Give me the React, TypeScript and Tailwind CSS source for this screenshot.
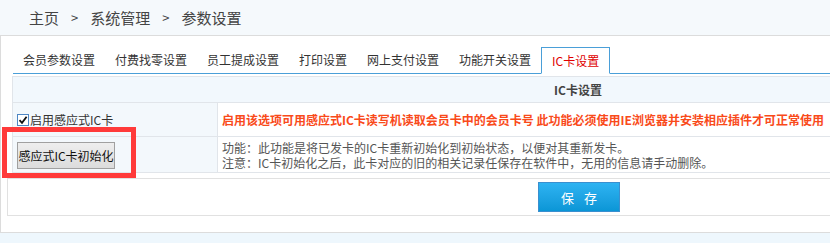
import React from "react";

const tabs = ["会员参数设置", "付费找零设置", "员工提成设置", "打印设置", "网上支付设置", "功能开关设置", "IC卡设置"];

const CheckBox = () => (
  <span className="inline-flex w-[12px] h-[12px] border border-[#4d86c4] bg-white items-center justify-center shrink-0">
    <svg width="10" height="10" viewBox="0 0 10 10">
      <path d="M1.5 5.2 L4 7.8 L8.6 1.8" fill="none" stroke="#111" strokeWidth="1.8" />
    </svg>
  </span>
);

export default function App() {
  return (
    <div
      className="relative w-[830px] h-[243px] overflow-hidden bg-[#eef7fd]"
      style={{ fontFamily: '"Noto Sans CJK SC", "Liberation Sans", sans-serif' }}
    >
      {/* breadcrumb */}
      <div className="h-[36px] bg-[#f5f9fc] border-b border-[#dcdcdc] flex items-center pl-[29px] text-[15px] text-[#444] leading-none">
        <span>主页</span>
        <span className="mx-[12px] text-[13px]">&gt;</span>
        <span>系统管理</span>
        <span className="mx-[12px] text-[13px]">&gt;</span>
        <span>参数设置</span>
      </div>

      {/* content panel */}
      <div className="h-[197px] bg-white border-l border-b border-[#dcdcdc] overflow-hidden">
        <div className="ml-[12px] mt-[11px] flex border-b border-[#4a9fd8] w-[1200px] h-[27px]">
          {tabs.map((t, i) =>
            i === tabs.length - 1 ? (
              <div
                key={t}
                className="px-[10px] h-[27px] border border-[#4a9fd8] border-b-white bg-white text-[12px] leading-[25px] text-[#e00000]"
              >
                {t}
              </div>
            ) : (
              <div key={t} className="px-[10px] h-[26px] text-[12px] leading-[26px] text-[#333]">
                {t}
              </div>
            )
          )}
        </div>

        <div className="ml-[11px] mt-[2px] w-[1132px] border border-[#e1e5ea]">
          <div className="h-[26px] bg-[#f2f8fd] border-b border-[#e1e5ea] flex items-center justify-center text-[12px] font-bold text-[#444]">
            IC卡设置
          </div>
          <div className="flex h-[34px] border-b border-[#e1e5ea]">
            <div className="w-[205px] bg-[#f3f8fc] border-r border-[#e1e5ea] flex items-center pl-[4px] gap-[1px] text-[12px] text-[#333]">
              <CheckBox />
              <span>启用感应式IC卡</span>
            </div>
            <div className="flex-1 flex items-center pl-[4px] text-[12px] font-bold text-[#f94a1a] whitespace-nowrap">
              启用该选项可用感应式IC卡读写机读取会员卡中的会员卡号 此功能必须使用IE浏览器并安装相应插件才可正常使用
            </div>
          </div>
          <div className="flex h-[35px]">
            <div className="w-[205px] bg-[#f3f8fc] border-r border-[#e1e5ea] flex items-center pl-[4px]">
              <button className="w-[98px] h-[27px] mt-[2px] border border-[#a0a0a0] bg-gradient-to-b from-[#eeeeee] to-[#dcdcdc] text-[12px] text-[#111] leading-none">
                感应式IC卡初始化
              </button>
            </div>
            <div className="flex-1 flex flex-col justify-center pl-[4px] text-[12px] leading-[15px] text-[#555] whitespace-nowrap">
              <span>功能：此功能是将已发卡的IC卡重新初始化到初始状态，以便对其重新发卡。</span>
              <span>注意：IC卡初始化之后，此卡对应的旧的相关记录任保存在软件中，无用的信息请手动删除。</span>
            </div>
          </div>
        </div>

        <div className="ml-[6px] mt-[5px] w-[1144px] h-[38px] border border-[#e1e1e1] flex items-center justify-center">
          <button className="w-[82px] h-[30px] border border-[#3a8fcf] bg-gradient-to-b from-[#2db3f2] to-[#0a96d6] text-white text-[13px] tracking-[10px] pl-[10px] leading-none">
            保存
          </button>
        </div>
      </div>

      {/* annotation frame */}
      <div className="absolute left-[2px] top-[127px] w-[134px] h-[51px] border-[5px] border-[#ff3a3a]" />
    </div>
  );
}
